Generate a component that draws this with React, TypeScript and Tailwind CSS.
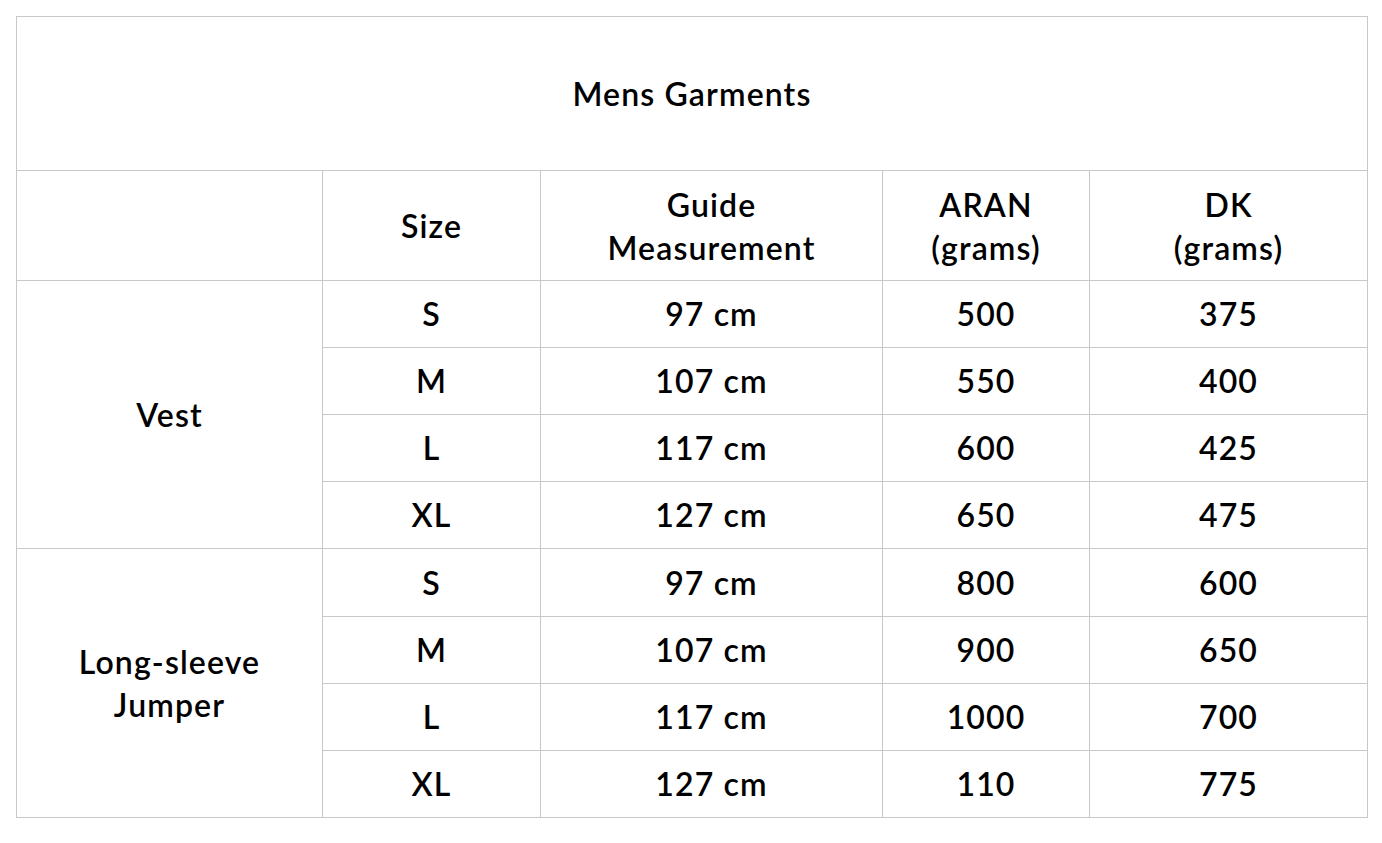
import React from 'react';

// Row data for the size chart
interface SizeRow {
  size: string;
  guide: string;
  aran: string;
  dk: string;
}

const vest: SizeRow[] = [
  { size: 'S', guide: '97 cm', aran: '500', dk: '375' },
  { size: 'M', guide: '107 cm', aran: '550', dk: '400' },
  { size: 'L', guide: '117 cm', aran: '600', dk: '425' },
  { size: 'XL', guide: '127 cm', aran: '650', dk: '475' },
];

const jumper: SizeRow[] = [
  { size: 'S', guide: '97 cm', aran: '800', dk: '600' },
  { size: 'M', guide: '107 cm', aran: '900', dk: '650' },
  { size: 'L', guide: '117 cm', aran: '1000', dk: '700' },
  { size: 'XL', guide: '127 cm', aran: '110', dk: '775' },
];

const cell = 'border border-[#c8c8c8] text-center align-middle p-0';

function Group({ label, rows, tall }: { label: React.ReactNode; rows: SizeRow[]; tall?: boolean }): JSX.Element {
  return (
    <>
      {rows.map((r, i) => (
        <tr key={r.size} className={tall && i === 0 ? 'h-[68px]' : 'h-[67px]'}>
          {i === 0 && (
            <td rowSpan={rows.length} className={`${cell} leading-[43px]`}>
              {label}
            </td>
          )}
          <td className={cell}>{r.size}</td>
          <td className={cell}>{r.guide}</td>
          <td className={cell}>{r.aran}</td>
          <td className={cell}>{r.dk}</td>
        </tr>
      ))}
    </>
  );
}

export default function App(): JSX.Element {
  return (
    <div className="min-h-screen bg-white pl-4 pt-4 text-black font-['Lato','Liberation_Sans',sans-serif] font-semibold tracking-[0.035em] text-[32px]">
      <table className="table-fixed border-collapse w-[1351px]">
        <colgroup>
          <col className="w-[306px]" />
          <col className="w-[218px]" />
          <col className="w-[342px]" />
          <col className="w-[207px]" />
          <col className="w-[278px]" />
        </colgroup>
        <tbody>
          <tr className="h-[154px]">
            <td colSpan={5} className={cell}>Mens Garments</td>
          </tr>
          <tr className="h-[110px] leading-[43px]">
            <td className={cell}></td>
            <td className={cell}>Size</td>
            <td className={cell}>Guide<br />Measurement</td>
            <td className={cell}>ARAN<br />(grams)</td>
            <td className={cell}>DK<br />(grams)</td>
          </tr>
          <Group label="Vest" rows={vest} />
          <Group label={<>Long-sleeve<br />Jumper</>} rows={jumper} tall />
        </tbody>
      </table>
    </div>
  );
}
